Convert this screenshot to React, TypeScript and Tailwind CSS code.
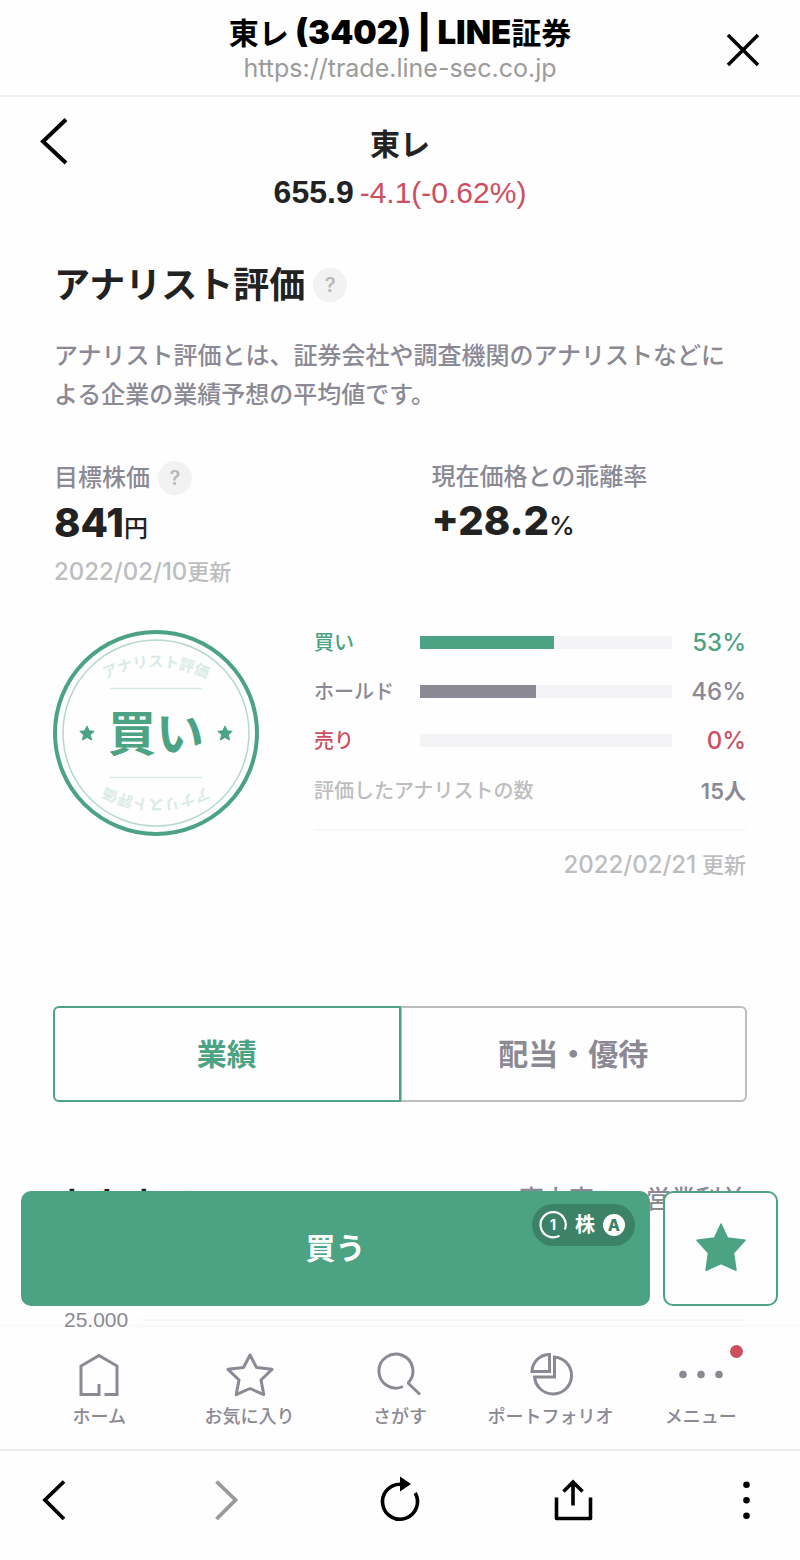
import { useState } from "react";
import type { ReactNode } from "react";

const ratings = [
  { label: "買い", percent: 53, text: "text-[#4ba383]", bar: "bg-[#4ba383]" },
  { label: "ホールド", percent: 46, text: "text-[#8b8994]", bar: "bg-[#8b8994]" },
  { label: "売り", percent: 0, text: "text-[#cd4f5f]", bar: "bg-[#cd4f5f]" },
];

const tabs = ["業績", "配当・優待"];

function Icon({ children, className = "" }: { children: ReactNode; className?: string }) {
  return (
    <svg viewBox="0 0 48 48" className={`size-12 fill-none stroke-current ${className}`} aria-hidden="true">
      {children}
    </svg>
  );
}

function HelpButton({ label }: { label: string }) {
  return (
    <button
      type="button"
      aria-label={label}
      className="flex size-[34px] shrink-0 items-center justify-center rounded-full bg-[#f2f2f2] text-[20px] font-semibold text-[#b9b9b9]"
    >
      ?
    </button>
  );
}

// Round "analyst rating" seal
function RatingStamp() {
  return (
    <svg viewBox="0 0 208 208" className="size-[208px] shrink-0" role="img" aria-label="アナリスト評価 買い">
      <defs>
        <path id="stampArc" d="M39 59A110 110 0 0 1 169 59" />
      </defs>
      <circle cx="104" cy="104" r="101" fill="none" stroke="#4ba383" strokeWidth="4" />
      <circle cx="104" cy="104" r="93" fill="none" stroke="#b4d9cc" strokeWidth="1.5" />
      <path d="M58 59.500H150M58 148.500H150" stroke="#d6eae3" strokeWidth="1.5" />
      <g fill="#d8ebe5" fontSize="15" fontWeight="700">
        <text textAnchor="middle">
          <textPath href="#stampArc" startOffset="50%">アナリスト評価</textPath>
        </text>
        <text textAnchor="middle" transform="rotate(180 104 104)">
          <textPath href="#stampArc" startOffset="50%">アナリスト評価</textPath>
        </text>
      </g>
      <text x="104" y="122" textAnchor="middle" fontSize="48" fontWeight="700" fill="#4ba383">
        買い
      </text>
      <g fill="#4ba383" stroke="#4ba383" strokeLinejoin="round">
        <path d="M35 97l2.200 4.800 5 .5-3.800 3.500 1.200 5.200-4.600-2.600-4.600 2.600 1.200-5.200-3.800-3.500 5-.5z" />
        <path d="M173 97l2.200 4.800 5 .5-3.800 3.500 1.200 5.200-4.600-2.600-4.600 2.600 1.200-5.200-3.800-3.500 5-.5z" />
      </g>
    </svg>
  );
}

function BrowserHeader() {
  return (
    <header className="relative border-b-2 border-[#eeeeee] pt-3 pb-[11px] text-center">
      <p className="text-[30px] leading-10 font-bold text-black">
        東レ<span className="text-[33px] font-black"> (3402) | LINE</span>証券
      </p>
      <p className="text-[25px] leading-[31px] text-[#9b9b9b]">https://trade.line-sec.co.jp</p>
      <button type="button" aria-label="閉じる" className="absolute top-[26px] right-[33px] text-black">
        <Icon>
          <path d="M9 9L39 39M39 9L9 39" strokeWidth="3.500" />
        </Icon>
      </button>
    </header>
  );
}

function StockHeader() {
  return (
    <div className="relative pt-6 text-center">
      <button type="button" aria-label="戻る" className="absolute top-5 left-[30px] text-black">
        <Icon>
          <path d="M36 2.500L13 24.500L36 46" strokeWidth="4" />
        </Icon>
      </button>
      <h1 className="text-[30px] leading-[46px] font-bold">東レ</h1>
      <p className="flex items-baseline justify-center gap-1.5 font-['Liberation_Sans',sans-serif] leading-[50px]">
        <span className="text-[32px] font-bold">655.9</span>
        <span className="text-[30px] text-[#cd4f5f]">-4.1(-0.62%)</span>
      </p>
    </div>
  );
}

function AnalystRating() {
  return (
    <section className="px-[54px] pt-[39px]">
      <div className="flex items-center gap-2">
        <h2 className="text-[36px] leading-[56px] font-bold">アナリスト評価</h2>
        <HelpButton label="アナリスト評価とは" />
      </div>
      <p className="mt-[23px] text-[24px] leading-[39px] font-medium text-[#8b8994]">
        アナリスト評価とは、証券会社や調査機関のアナリストなどによる企業の業績予想の平均値です。
      </p>

      <div className="mt-[46px] grid grid-cols-[6fr_5fr]">
        <div>
          <div className="flex items-center gap-2">
            <h3 className="text-[24px] leading-9 font-medium text-[#8b8994]">目標株価</h3>
            <HelpButton label="目標株価とは" />
          </div>
          <p className="text-[40px] leading-[54px] font-extrabold">
            841<span className="text-[24px] font-medium">円</span>
          </p>
          <p className="text-[22px] leading-8 font-medium text-[#bdbdc0]">
            <span className="text-[24px]">2022/02/10</span>更新
          </p>
        </div>
        <div>
          <h3 className="text-[24px] leading-[34px] font-medium text-[#8b8994]">現在価格との乖離率</h3>
          <p className="text-[40px] leading-[54px] font-extrabold">
            +28.2<span className="text-[26px] font-medium">%</span>
          </p>
        </div>
      </div>

      <div className="mt-[30px] flex gap-[54px]">
        <div className="-ml-0.5 pt-[11px]">
          <RatingStamp />
        </div>
        <div className="flex-1">
          {ratings.map((r) => (
            <div key={r.label} className={`flex h-[49px] items-center text-[20px] font-medium ${r.text}`}>
              <span className="w-[106px]">{r.label}</span>
              <div className="h-[13px] flex-1 bg-[#f4f4f6]">
                <div className={`h-full ${r.bar}`} style={{ width: `${r.percent}%` }} />
              </div>
              <span className="w-[74px] text-right text-[24px]">{r.percent}%</span>
            </div>
          ))}
          <div className="flex h-[66px] items-start justify-between border-b-2 border-[#f7f7f8] pt-2 text-[22px] leading-9">
            <span className="text-[20px] font-medium text-[#bdbdc0]">評価したアナリストの数</span>
            <span className="font-semibold text-[#8b8994]">15人</span>
          </div>
          <p className="mt-4 text-right text-[22px] leading-9 font-medium text-[#bdbdc0]">
            <span className="text-[24px]">2022/02/21</span> 更新
          </p>
        </div>
      </div>
    </section>
  );
}

function ResultTabs() {
  const [active, setActive] = useState(0);
  return (
    <div role="tablist" className="mx-[53px] mt-[123px] flex">
      {tabs.map((tab, i) => (
        <button
          key={tab}
          type="button"
          role="tab"
          aria-selected={active === i}
          onClick={() => setActive(i)}
          className={`h-24 flex-1 border-2 text-[30px] font-bold first:rounded-l-md last:rounded-r-md ${
            active === i ? "border-[#4ba383] text-[#4ba383]" : "border-[#bdbdc1] text-[#8b8994] last:border-l"
          }`}
        >
          {tab}
        </button>
      ))}
    </div>
  );
}

function SalesChart() {
  return (
    <section className="px-[54px] pt-[78px]">
      <div className="flex items-start justify-between">
        <div className="flex items-center gap-[10px] pt-0.5">
          <h2 className="text-[36px] leading-[50px] font-bold">売上高</h2>
          <HelpButton label="売上高とは" />
        </div>
        <div className="flex gap-[52px] text-[25px] leading-[38px] font-medium text-[#8b8994]">
          <button type="button">売上高</button>
          <button type="button">営業利益</button>
        </div>
      </div>
      <div className="mt-[74px] flex items-center gap-3 pl-[10px]">
        <span className="font-['Liberation_Sans',sans-serif] text-[21px] leading-7 text-[#8b8994]">25.000</span>
        <span className="h-0.5 flex-1 bg-[#f7f7f8]" />
      </div>
    </section>
  );
}

function BuyBar() {
  return (
    <div className="absolute inset-x-0 bottom-[21px] flex gap-[13px] pr-[22px] pl-[21px]">
      <button
        type="button"
        className="relative h-[115px] flex-1 rounded-[10px] bg-[#4ba383] text-[30px] font-bold text-white"
      >
        買う
        <span className="absolute top-[13px] right-[15px] flex h-[42px] items-center gap-2 rounded-full bg-[#3b8268] px-[7px] text-[20px]">
          <svg viewBox="0 0 28 28" className="size-7" aria-hidden="true">
            <path d="M20.500 24.600A12.600 12.600 0 1 1 25.800 18.500" fill="none" stroke="#fff" strokeWidth="2.200" />
            <text x="14" y="19" textAnchor="middle" fontSize="14" fontWeight="700" fill="#fff">1</text>
          </svg>
          株
          <span className="mr-[3px] flex size-[22px] items-center justify-center rounded-full bg-white text-[16px] leading-none font-extrabold text-[#3b8268]">
            A
          </span>
        </span>
      </button>
      <button
        type="button"
        aria-label="お気に入りに追加"
        className="flex size-[115px] items-center justify-center rounded-[10px] border-2 border-[#4ba383] bg-[#fefefe] text-[#4ba383]"
      >
        <svg viewBox="0 0 56 56" className="size-14 fill-current stroke-current" aria-hidden="true">
          <path
            d="M28 3L34.500 17L52 19.300L40.500 32L43 49.300L28 42.500L13 49.300L15.500 32L4 19.300L21.500 17Z"
            strokeWidth="1.500"
            strokeLinejoin="round"
          />
        </svg>
      </button>
    </div>
  );
}

const navItems = [
  { label: "ホーム", icon: <path d="M24 33V43.500H6V15L24 4.500L42 15V43.500H29.500" /> },
  {
    label: "お気に入り",
    icon: (
      <path
        d="M24 4L30.500 16.500L46 18.300L35 29L37.800 43.600L24 37.500L10.200 43.600L13 29L2 18.300L17.500 16.500Z"
        strokeLinejoin="round"
      />
    ),
  },
  { label: "さがす", icon: <path d="M27 35.500A17 17 0 1 1 32 32L44 43.500" strokeLinejoin="bevel" /> },
  {
    label: "ポートフォリオ",
    icon: (
      <>
        <path d="M28.500 6A18.500 18.500 0 1 1 8.600 26H28.500Z" />
        <path d="M23.500 3.500V20.500H6A17.500 17.500 0 0 1 23.500 3.500Z" />
      </>
    ),
  },
  {
    label: "メニュー",
    badge: true,
    icon: (
      <g className="fill-current stroke-none">
        <circle cx="6" cy="23.500" r="3.800" />
        <circle cx="24" cy="23.500" r="3.800" />
        <circle cx="42" cy="23.500" r="3.800" />
      </g>
    ),
  },
];

function AppNav() {
  return (
    <nav className="flex border-b-2 border-[#ebebeb] px-6 pt-6 pb-[18px] shadow-[0_-2px_4px_rgba(0,0,0,0.03)]">
      {navItems.map((item) => (
        <a key={item.label} href="#" className="relative flex flex-1 flex-col items-center text-[#8b8994]">
          <Icon className="stroke-3">{item.icon}</Icon>
          <span className="mt-1 text-[18px] leading-7 font-medium whitespace-nowrap">{item.label}</span>
          {item.badge && (
            <span className="absolute -top-[6px] left-1/2 ml-[29px] size-[13px] rounded-full bg-[#cd4f5f]" />
          )}
        </a>
      ))}
    </nav>
  );
}

function BrowserToolbar() {
  return (
    <footer className="flex justify-between px-[30px] pt-[25px] pb-9 text-black">
      <button type="button" aria-label="前のページ">
        <Icon>
          <path d="M34 5.500L15 24L34 43" strokeWidth="3.800" />
        </Icon>
      </button>
      <button type="button" aria-label="次のページ" className="text-[#999999]">
        <Icon>
          <path d="M13.500 5.500L32.500 24L13.500 43" strokeWidth="3.800" />
        </Icon>
      </button>
      <button type="button" aria-label="再読み込み">
        <Icon>
          <path d="M26 8.200H24A17.500 17.500 0 1 0 39.200 17" strokeWidth="3.600" />
          <path d="M24 0.500L35 8L24 15.500Z" className="fill-current stroke-none" />
        </Icon>
      </button>
      <button type="button" aria-label="共有">
        <Icon>
          <path d="M7.500 21.500V42.500H41.500V21.500" strokeWidth="3.600" strokeLinejoin="round" />
          <path d="M24 29.500V6M14.500 15.500L24 6L33.500 15.500" strokeWidth="3.600" />
        </Icon>
      </button>
      <button type="button" aria-label="その他">
        <Icon>
          <g className="fill-current stroke-none">
            <circle cx="24.500" cy="8.700" r="3.300" />
            <circle cx="24.500" cy="24.200" r="3.300" />
            <circle cx="24.500" cy="39.700" r="3.300" />
          </g>
        </Icon>
      </button>
    </footer>
  );
}

export default function App() {
  return (
    <div
      lang="ja"
      className="flex h-screen flex-col bg-[#fefefe] font-['Inter','Noto_Sans_CJK_JP',sans-serif] text-[#222222]"
    >
      <BrowserHeader />
      <div className="relative min-h-0 flex-1">
        <main className="h-full overflow-hidden">
          <StockHeader />
          <AnalystRating />
          <ResultTabs />
          <SalesChart />
        </main>
        <BuyBar />
      </div>
      <AppNav />
      <BrowserToolbar />
    </div>
  );
}
